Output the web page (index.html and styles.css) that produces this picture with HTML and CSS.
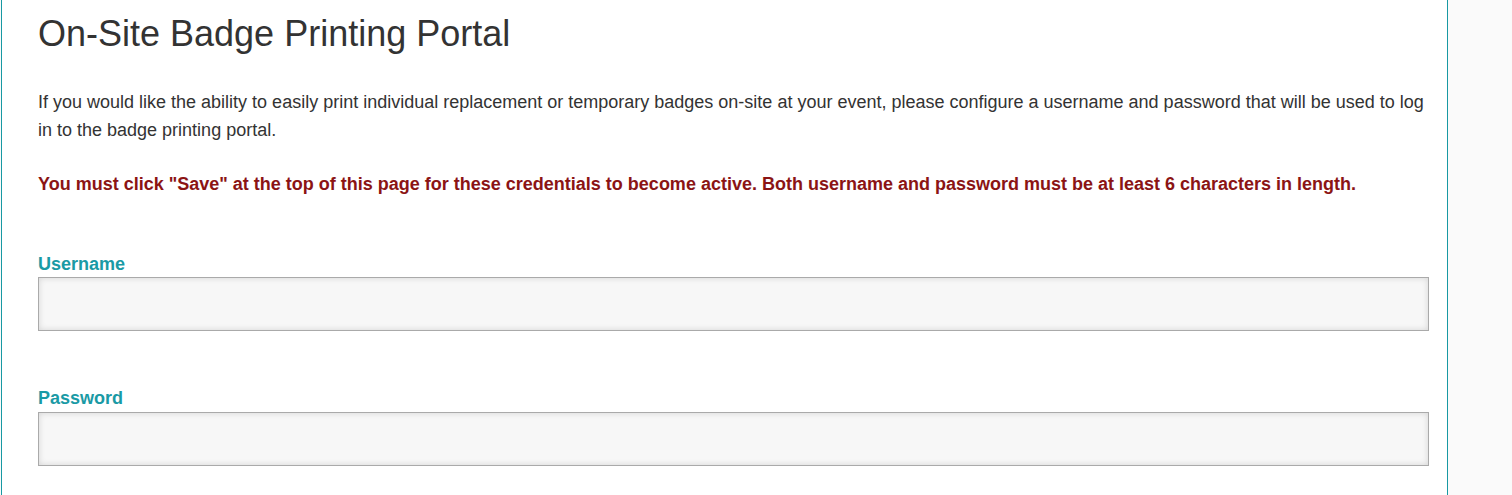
FILE: index.html
```html
<!DOCTYPE html>
<html>
<head>
<meta charset="utf-8">
<link rel="stylesheet" href="styles.css">
</head>
<body>
<div class="page">
  <section class="panel">
    <h1 class="title">On-Site Badge Printing Portal</h1>
    <p class="intro">If you would like the ability to easily print individual replacement or temporary badges on-site at your event, please configure a username and password that will be used to log in to the badge printing portal.</p>
    <p class="warning">You must click "Save" at the top of this page for these credentials to become active. Both username and password must be at least 6 characters in length.</p>
    <div class="field first">
      <label class="label" for="username">Username</label>
      <input class="input" id="username" type="text">
    </div>
    <div class="field">
      <label class="label" for="password">Password</label>
      <input class="input" id="password" type="password">
    </div>
  </section>
  <div class="side"></div>
</div>
</body>
</html>
```
FILE: styles.css
```css
html, body {
  margin: 0;
  padding: 0;
  height: 100%;
}
body {
  font-family: "Liberation Sans", Arial, sans-serif;
  color: #333;
  background: #fafafa;
  overflow: hidden;
}
.page {
  display: flex;
  height: 495px;
}
.panel {
  width: 1447px;
  margin-left: 1px;
  background: #fff;
  border-left: 1px solid #1899a3;
  border-right: 1px solid #1899a3;
  padding: 14px 18px 0 36px;
  box-sizing: border-box;
}
.side {
  flex: 1;
  background: #fafafa;
}
.title {
  font-size: 36px;
  font-weight: normal;
  line-height: 40px;
  margin: 0 0 34px 0;
  color: #333;
}
.intro {
  font-size: 18px;
  line-height: 28px;
  margin: 0 0 26px 0;
}
.warning {
  font-size: 18px;
  font-weight: bold;
  line-height: 28px;
  color: #8b1414;
  margin: 0;
}
.field {
  display: flex;
  flex-direction: column;
}
.field.first {
  margin-top: 56px;
}
.field + .field {
  margin-top: 57px;
}
.label {
  font-size: 18px;
  font-weight: bold;
  line-height: 20px;
  color: #1a9aa5;
  margin-bottom: 4px;
}
.field.first .label {
  margin-bottom: 3px;
}
.input {
  height: 54px;
  box-sizing: border-box;
  border: 1px solid #aaa;
  background: #f7f7f7;
  box-shadow: inset 0 0 6px rgba(0,0,0,0.14);
  margin: 0;
  padding: 0 10px;
  font-size: 18px;
}
```
